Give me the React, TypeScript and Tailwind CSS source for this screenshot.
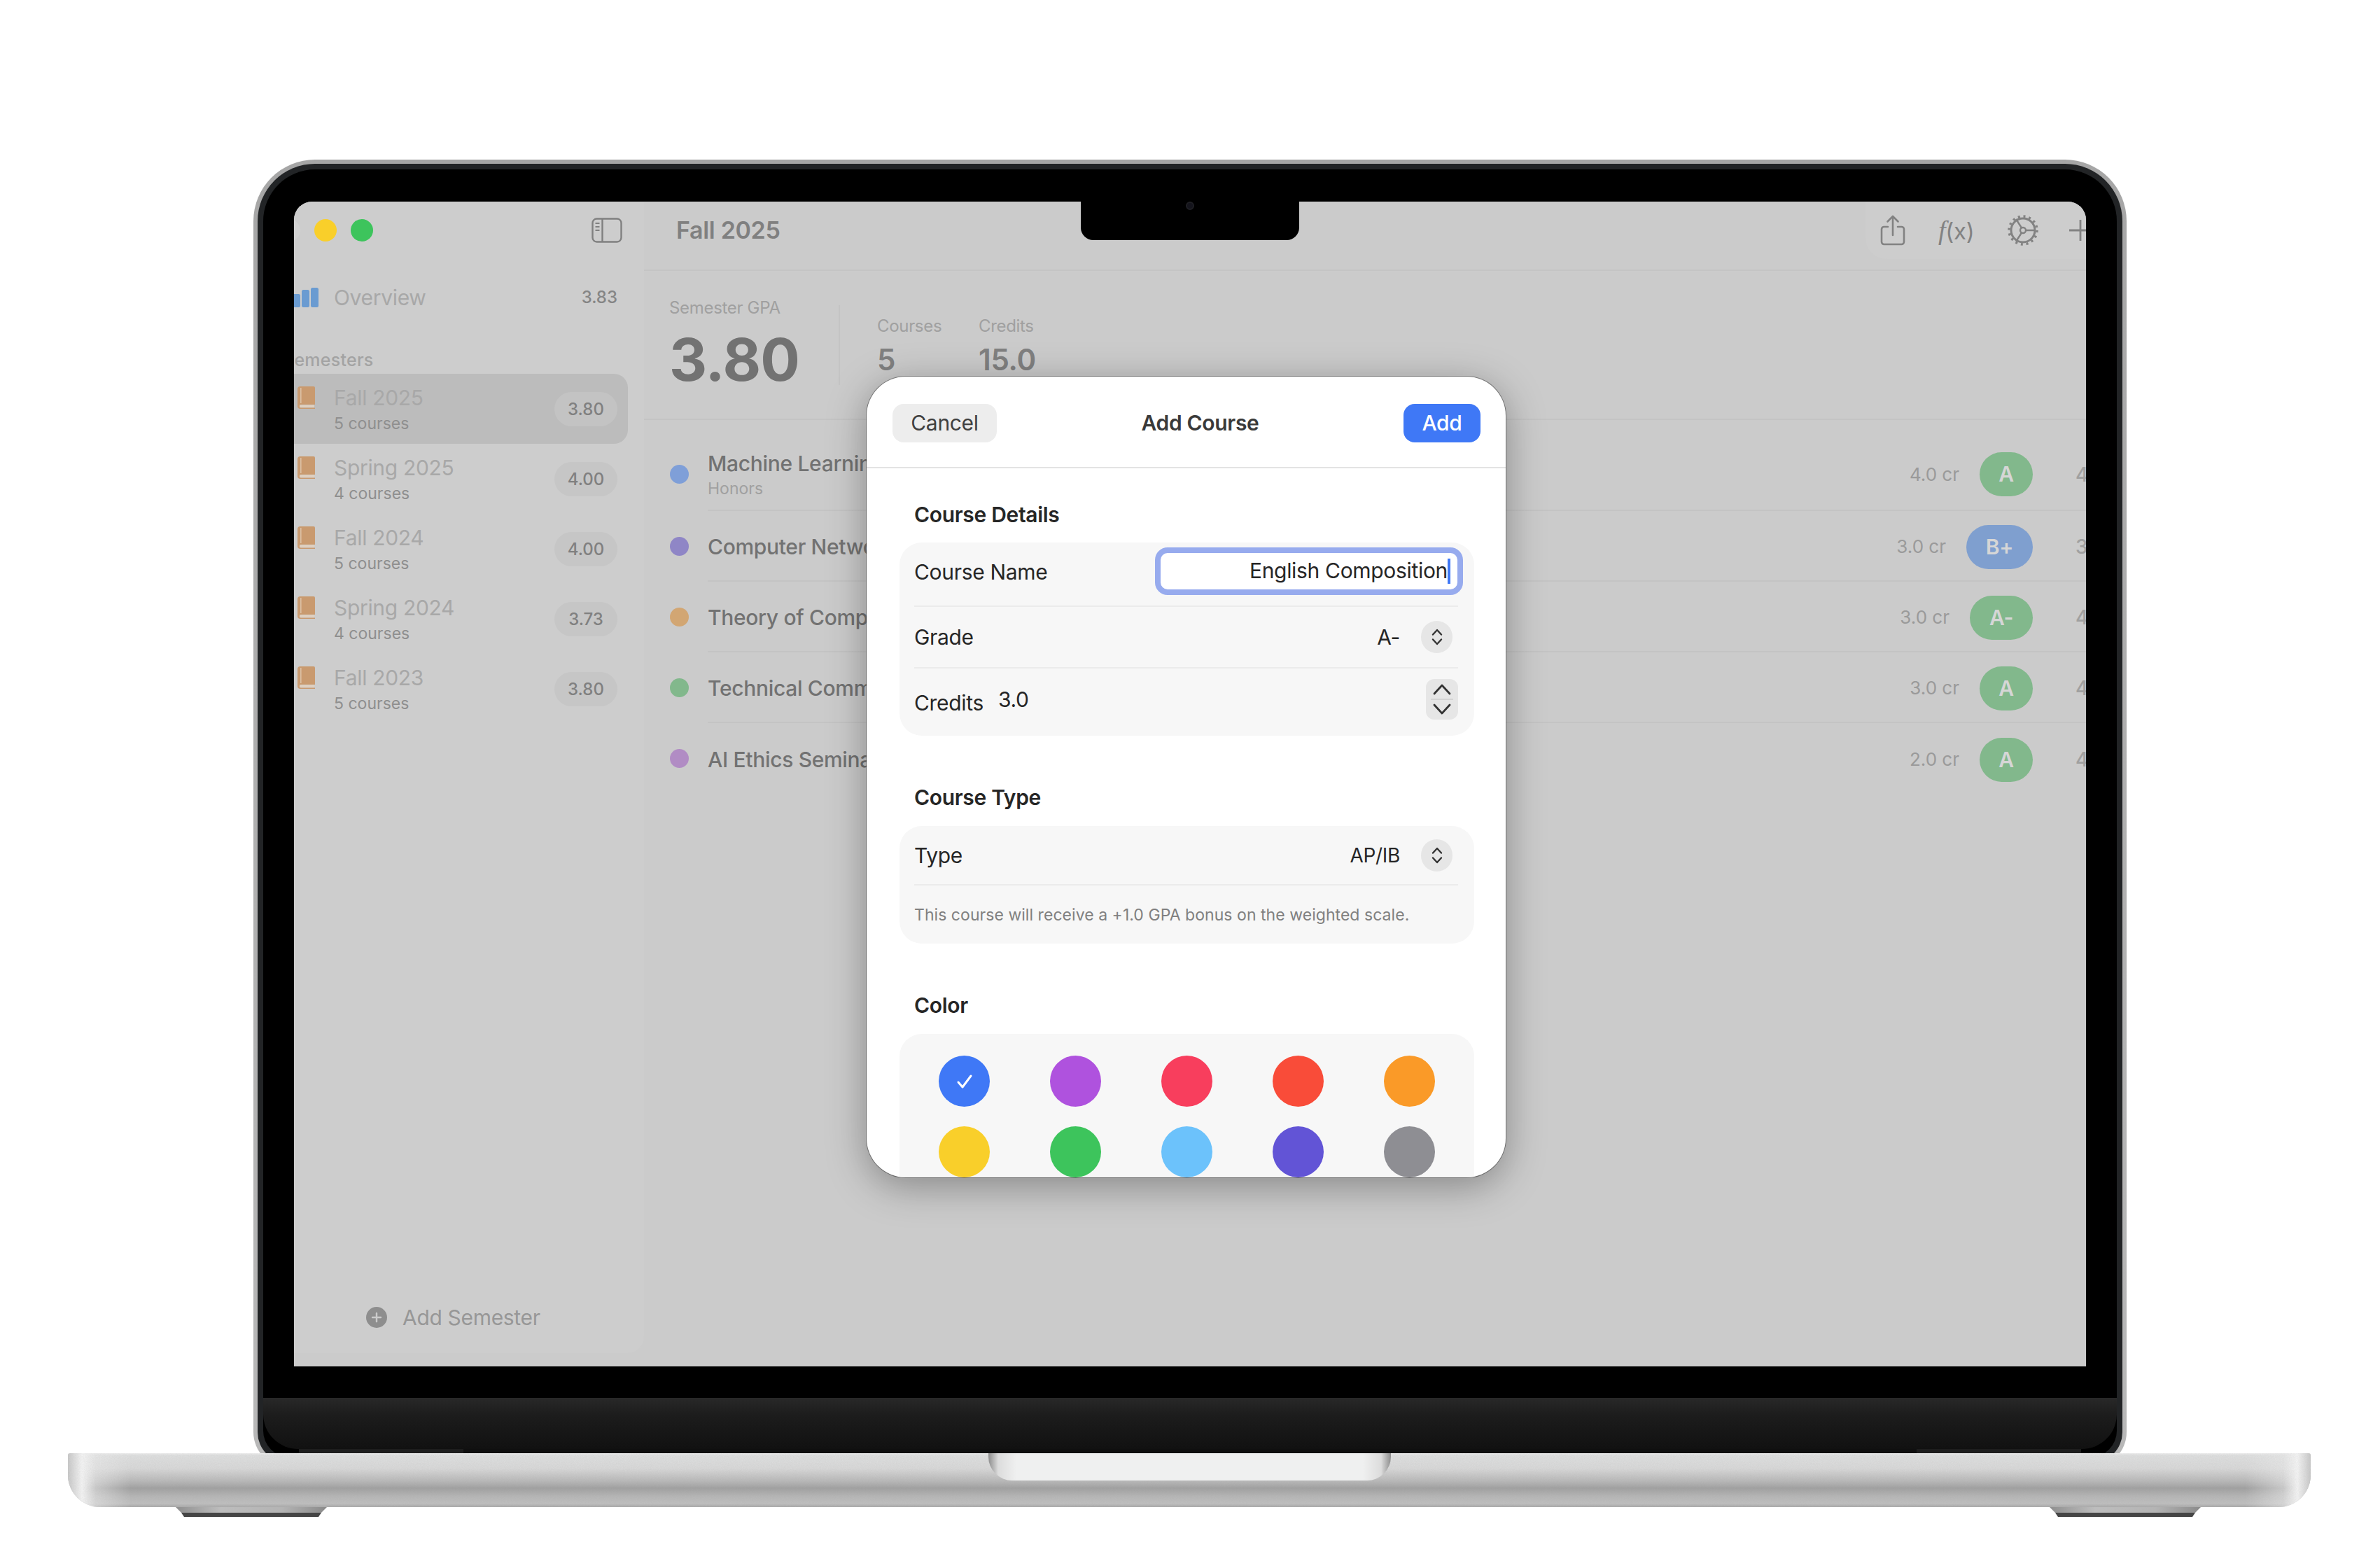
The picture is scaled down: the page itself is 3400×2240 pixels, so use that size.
import React from "react";

const semesters = [
  { name: "Fall 2025", sub: "5 courses", gpa: "3.80", selected: true },
  { name: "Spring 2025", sub: "4 courses", gpa: "4.00" },
  { name: "Fall 2024", sub: "5 courses", gpa: "4.00" },
  { name: "Spring 2024", sub: "4 courses", gpa: "3.73" },
  { name: "Fall 2023", sub: "5 courses", gpa: "3.80" },
];

const courses = [
  { name: "Machine Learning", sub: "Honors", dot: "bg-[#7f9fd8]", cr: "4.0 cr", grade: "A", badge: "bg-[#82b88c] w-[76px]", pts: "4.00", first: true },
  { name: "Computer Networks", dot: "bg-[#8f86c6]", cr: "3.0 cr", grade: "B+", badge: "bg-[#7f9fcf] w-[95px]", pts: "3.30" },
  { name: "Theory of Computation", dot: "bg-[#d2a673]", cr: "3.0 cr", grade: "A-", badge: "bg-[#82b88c] w-[90px]", pts: "4.00" },
  { name: "Technical Communication", dot: "bg-[#82b88c]", cr: "3.0 cr", grade: "A", badge: "bg-[#82b88c] w-[76px]", pts: "4.00" },
  { name: "AI Ethics Seminar", dot: "bg-[#b18cc4]", cr: "2.0 cr", grade: "A", badge: "bg-[#82b88c] w-[76px]", pts: "4.00", last: true },
];

const swatches = [
  "bg-[#3f78f6]", "bg-[#af52de]", "bg-[#f83e5d]", "bg-[#f94c39]", "bg-[#fa9a28]",
  "bg-[#f9cf2a]", "bg-[#3dc45c]", "bg-[#6cc2fb]", "bg-[#6254d6]", "bg-[#8e8e93]",
];

function Book() {
  return (
    <svg width="26" height="32" viewBox="0 0 26 32" className="shrink-0">
      <path d="M4 0h19a2 2 0 0 1 2 2v24H5a2.2 2.2 0 0 0 0 4.4h20V32H4a4 4 0 0 1-4-4V4a4 4 0 0 1 4-4z" fill="#c99a6f" />
      <rect x="4" y="2" width="1.6" height="22" fill="#dcc0a4" />
      <rect x="3" y="26.5" width="21" height="3.6" fill="#dfd0c0" />
    </svg>
  );
}

function UpDown({ label }: { label?: string }) {
  return (
    <div aria-label={label} className="w-[45px] h-[46px] rounded-full bg-[#e6e6e6] flex items-center justify-center shrink-0">
      <svg width="18" height="24" viewBox="0 0 18 24" fill="none" stroke="#333" strokeWidth="2.4" strokeLinecap="round" strokeLinejoin="round">
        <path d="M3 8.5 9 2l6 6.5" />
        <path d="M3 15.5 9 22l6-6.5" />
      </svg>
    </div>
  );
}

function Foot() {
  return (
    <svg width="216" height="14" viewBox="0 0 216 14">
      <defs>
        <linearGradient id="footMetal" x1="0" x2="1" y1="0" y2="0">
          <stop offset="0" stopColor="#8f8f8f" />
          <stop offset="0.3" stopColor="#bdbdbd" />
          <stop offset="0.7" stopColor="#b4b4b4" />
          <stop offset="1" stopColor="#8a8a8a" />
        </linearGradient>
      </defs>
      <path d="M0 0H216L208 8H8Z" fill="url(#footMetal)" />
      <path d="M8 8H208L204 14H12Z" fill="#454545" />
    </svg>
  );
}

export default function App() {
  return (
    <div className="w-[3400px] h-[2240px] bg-white overflow-hidden flex flex-col items-center pt-[228px] tracking-[-0.02em] [font-family:Inter,'Noto_Sans',sans-serif]">
      {/* Lid */}
      <div className="w-[2676px] h-[1868px] rounded-t-[88px] rounded-b-[50px] bg-[linear-gradient(180deg,#a6a6a6,#b8b8b8)] p-[6px] shrink-0">
        <div className="w-full h-full rounded-t-[82px] rounded-b-[44px] bg-[#222426] p-[8px]">
          <div className="w-full h-full rounded-t-[74px] rounded-b-[38px] bg-black pt-[46px] px-[44px] flex flex-col items-center">
            {/* Screen */}
            <div className="w-[2560px] h-[1664px] shrink-0 rounded-t-[26px] overflow-hidden relative flex bg-[#cbcbcb]">
              {/* Sidebar */}
              <aside className="w-[500px] h-[1645px] shrink-0 rounded-br-[24px] bg-[#cdcdcd] flex flex-col">
                <div className="h-[82px] flex items-center shrink-0">
                  <div className="w-[32px] h-[32px] rounded-full bg-[#d2d2d2] -ml-[23px]" />
                  <div className="w-[32px] h-[32px] rounded-full bg-[#f9cf2a] ml-[20px]" />
                  <div className="w-[32px] h-[32px] rounded-full bg-[#3dc45c] ml-[20px]" />
                  <svg width="44" height="36" viewBox="0 0 44 36" fill="none" className="ml-auto mr-[31px]" stroke="#808080" strokeWidth="2.4">
                    <rect x="1.5" y="1.5" width="41" height="33" rx="6" />
                    <path d="M15.5 1.5v33" />
                    <path d="M5.5 8h6M5.5 13h6M5.5 18h6" strokeWidth="2" />
                  </svg>
                </div>

                <div className="h-[110px] flex items-center shrink-0 pr-[38px]">
                  <svg width="39" height="28" viewBox="0 0 39 28" className="-ml-[3px] shrink-0">
                    <rect x="0" y="9" width="12" height="19" rx="2.5" fill="#6a9bd1" />
                    <rect x="14" y="3" width="11" height="25" rx="2.5" fill="#6a9bd1" />
                    <rect x="27" y="0" width="11" height="28" rx="2.5" fill="#6a9bd1" />
                  </svg>
                  <span className="ml-[21px] text-[30px] leading-[38px] text-[#a8a8a8]">Overview</span>
                  <span className="ml-auto text-[24px] leading-[30px] font-medium tracking-normal text-[#858585]">3.83</span>
                </div>

                <div className="h-[54px] pt-[18px] -ml-[16px] text-[25px] leading-[32px] font-medium tracking-[0.01em] text-[#a3a3a3] shrink-0">Semesters</div>

                {semesters.map((s) => (
                  <div
                    key={s.name}
                    className={`h-[100px] -ml-[30px] w-[507px] rounded-[20px] pl-[35px] pr-[15px] flex items-center shrink-0 ${s.selected ? "bg-[#bcbcbc]" : ""}`}
                  >
                    <div className="self-start pt-[18px]">
                      <Book />
                    </div>
                    <div className="ml-[26px] flex flex-col self-start pt-[15px]">
                      <span className="text-[30px] leading-[38px] text-[#a8a8a8]">{s.name}</span>
                      <span className="mt-[3px] text-[23px] leading-[30px] tracking-normal text-[#8f8f8f]">{s.sub}</span>
                    </div>
                    <span className={`ml-auto mt-[1px] h-[49px] w-[90px] rounded-full flex items-center justify-center text-[24px] font-medium tracking-normal text-[#808080] ${s.selected ? "bg-[#c3c3c3]" : "bg-[#c6c6c6]"}`}>
                      {s.gpa}
                    </span>
                  </div>
                ))}

                <div className="mt-auto h-[70px] flex items-start pl-[103px] shrink-0">
                  <div className="flex items-center gap-[22px]">
                    <div className="w-[30px] h-[30px] rounded-full bg-[#8e8e8e] flex items-center justify-center">
                      <svg width="16" height="16" viewBox="0 0 16 16" stroke="#cbcbcb" strokeWidth="2.4" strokeLinecap="round">
                        <path d="M8 2v12M2 8h12" />
                      </svg>
                    </div>
                    <span className="text-[30px] leading-[38px] text-[#979797]">Add Semester</span>
                  </div>
                </div>
              </aside>

              {/* Main */}
              <main className="flex-1 min-w-0 flex flex-col">
                <header className="h-[99px] border-b-2 border-[#c4c4c4] flex items-center pl-[46px] pb-[16px] shrink-0">
                  <h1 className="text-[34px] leading-[44px] font-semibold text-[#808080]">Fall 2025</h1>
                  <div className="ml-auto self-start h-[82px] pl-[21px] bg-[#cdcdcd] rounded-bl-[30px] flex items-center">
                    <svg width="36" height="44" viewBox="0 0 36 44" fill="none" stroke="#828282" strokeWidth="2.6" strokeLinecap="round" strokeLinejoin="round">
                      <path d="M11 17H5.5A3.5 3.5 0 0 0 2 20.5v18A3.5 3.5 0 0 0 5.5 42h25a3.5 3.5 0 0 0 3.5-3.5v-18a3.5 3.5 0 0 0-3.5-3.5H25" />
                      <path d="M18 29V2M10.5 9.5 18 2l7.5 7.5" />
                    </svg>
                    <span className="ml-[47px] w-[52px] text-[33px] leading-[40px] text-[#828282] whitespace-nowrap">
                      <span className="italic [font-family:'Liberation_Serif',serif] text-[38px]">f</span>(x)
                    </span>
                    <svg width="44" height="44" viewBox="0 0 44 44" fill="none" stroke="#828282" className="ml-[47px]">
                      <circle cx="22" cy="22" r="17" strokeWidth="3" />
                      <circle cx="22" cy="22" r="20" strokeWidth="3.5" strokeDasharray="3 4.85" />
                      <circle cx="22" cy="22" r="4" strokeWidth="2.4" />
                      <path d="M26 22h14M20 18.5 12 6M20 25.5 12 38" strokeWidth="2.4" />
                    </svg>
                    <svg width="24" height="32" viewBox="0 0 24 32" stroke="#828282" strokeWidth="2.8" className="ml-[44px]">
                      <path d="M16 1v30M0 16h24" />
                    </svg>
                  </div>
                </header>

                <section className="h-[213px] border-b-2 border-[#c4c4c4] flex items-start pl-[36px] pt-[40px] shrink-0">
                  <div className="w-[242px] shrink-0">
                    <div className="text-[24px] leading-[26px] text-[#a0a0a0] whitespace-nowrap">Semester GPA</div>
                    <div className="mt-[19px] text-[84px] leading-[84px] font-bold tracking-[-0.01em] text-[#727272]">3.80</div>
                  </div>
                  <div className="w-[2px] h-[114px] mt-[9px] bg-[#c4c4c4] shrink-0" />
                  <div className="ml-[53px] w-[145px] mt-[26px] shrink-0">
                    <div className="text-[24px] leading-[26px] text-[#a0a0a0]">Courses</div>
                    <div className="mt-[10px] text-[42px] leading-[50px] font-semibold text-[#808080]">5</div>
                  </div>
                  <div className="mt-[26px] shrink-0">
                    <div className="text-[24px] leading-[26px] text-[#a0a0a0]">Credits</div>
                    <div className="mt-[10px] text-[42px] leading-[50px] font-semibold text-[#808080]">15.0</div>
                  </div>
                </section>

                {courses.map((c) => (
                  <div key={c.name} className={`flex items-stretch pl-[37px] shrink-0 ${c.first ? "h-[130px] pt-[24px]" : "h-[101px]"}`}>
                    <div className={`w-[27px] h-[27px] rounded-full self-center shrink-0 ${c.dot}`} />
                    <div className={`ml-[27px] pt-[3px] flex-1 min-w-0 flex items-center ${c.last ? "" : "border-b-2 border-[#c4c4c4]"}`}>
                      <div className="flex flex-col">
                        <span className="text-[30px] leading-[38px] font-medium text-[#727272]">{c.name}</span>
                        {c.sub && <span className="mt-[2px] text-[23px] leading-[30px] tracking-normal text-[#a0a0a0]">{c.sub}</span>}
                      </div>
                      <span className="ml-auto text-[26px] leading-[32px] tracking-normal text-[#9a9a9a]">{c.cr}</span>
                      <span className={`ml-[29px] h-[63px] rounded-full flex items-center justify-center text-[30px] font-semibold text-[#d6d6d6] shrink-0 ${c.badge}`}>
                        {c.grade}
                      </span>
                      <span className="w-[76px] pl-[61px] overflow-hidden whitespace-nowrap text-[28px] font-medium text-[#a0a0a0] shrink-0">{c.pts}</span>
                    </div>
                  </div>
                ))}
              </main>

              {/* Notch */}
              <div className="absolute top-0 left-[1124px] w-[312px] h-[55px] bg-black rounded-b-[18px] flex justify-center">
                <div className="w-[12px] h-[12px] rounded-full bg-[#14141c] border-2 border-[#1f1f24]" />
              </div>

              {/* Modal */}
              <div className="absolute left-[818px] top-[250px] w-[913px] h-[1144px] rounded-[56px] bg-white overflow-hidden flex flex-col shadow-[0_0_0_1px_rgba(0,0,0,0.35),0_12px_55px_rgba(0,0,0,0.34)]">
                <div className="h-[131px] border-b-2 border-[#e3e3e3] pl-[37px] pr-[36px] pt-[39px] flex items-start justify-between shrink-0">
                  <button className="w-[149px] h-[55px] rounded-[16px] bg-[#ededed] text-[30px] text-[#404040]">Cancel</button>
                  <span className="h-[55px] flex items-center text-[30px] font-semibold text-[#3a3a3a]">Add Course</span>
                  <button className="w-[110px] h-[55px] rounded-[16px] bg-[#3f78f6] text-[30px] font-medium text-white">Add</button>
                </div>

                <div className="pl-[47px] pr-[45px] pt-[48px] text-[#262626]">
                  <div className="pl-[21px] text-[30px] leading-[36px] font-semibold">Course Details</div>
                  <div className="mt-[22px] h-[276px] rounded-[32px] bg-[#f7f7f7] pl-[21px] pr-[23px] flex flex-col">
                    <div className="h-[92px] pb-[9px] border-b-2 border-[#ebebeb] flex items-center justify-between shrink-0">
                      <span className="mt-[2px] text-[30px] leading-[36px]">Course Name</span>
                      <div className="w-[440px] h-[68px] -mr-[7px] rounded-[18px] border-[8px] border-[#97abee] bg-white flex items-center justify-end pr-[10px] text-[30px]">
                        <span>English Composition</span>
                        <span className="w-[4px] h-[36px] bg-[#3f78f6] shrink-0" />
                      </div>
                    </div>
                    <div className="h-[88px] border-b-2 border-[#ebebeb] flex items-center shrink-0">
                      <span className="text-[30px] leading-[36px]">Grade</span>
                      <span className="ml-auto text-[30px] leading-[36px]">A-</span>
                      <div className="ml-[30px] mr-[8px]"><UpDown /></div>
                    </div>
                    <div className="h-[96px] pb-[8px] flex items-center shrink-0">
                      <span className="mt-[10px] text-[30px] leading-[36px]">Credits</span>
                      <span className="ml-[21px] text-[30px] leading-[36px]">3.0</span>
                      <div className="ml-auto w-[46px] h-[58px] rounded-[12px] bg-[#e6e6e6] flex flex-col items-center justify-center">
                        <svg width="26" height="16" viewBox="0 0 26 16" fill="none" stroke="#333" strokeWidth="2.8" strokeLinecap="round" strokeLinejoin="round">
                          <path d="M2 14 13 2l11 12" />
                        </svg>
                        <div className="w-[32px] h-[2px] bg-[#d4d4d4] my-[5px]" />
                        <svg width="26" height="16" viewBox="0 0 26 16" fill="none" stroke="#333" strokeWidth="2.8" strokeLinecap="round" strokeLinejoin="round">
                          <path d="M2 2l11 12L24 2" />
                        </svg>
                      </div>
                    </div>
                  </div>

                  <div className="mt-[70px] pl-[21px] text-[30px] leading-[36px] font-semibold">Course Type</div>
                  <div className="mt-[23px] h-[168px] rounded-[32px] bg-[#f7f7f7] pl-[21px] pr-[23px] flex flex-col">
                    <div className="h-[85px] border-b-2 border-[#ebebeb] flex items-center shrink-0">
                      <span className="text-[30px] leading-[36px]">Type</span>
                      <span className="ml-auto text-[28px] leading-[36px]">AP/IB</span>
                      <div className="ml-[30px] mr-[8px]"><UpDown /></div>
                    </div>
                    <div className="flex-1 flex items-center text-[23px] tracking-[0.002em] text-[#808080] pt-[2px]">
                      This course will receive a +1.0 GPA bonus on the weighted scale.
                    </div>
                  </div>

                  <div className="mt-[70px] pl-[21px] text-[30px] leading-[36px] font-semibold">Color</div>
                  <div className="mt-[23px] rounded-[32px] bg-[#f7f7f7] px-[13px] py-[31px] grid grid-cols-5 justify-items-center gap-y-[28px]">
                    {swatches.map((c, i) => (
                      <div key={c} className={`w-[73px] h-[73px] rounded-full flex items-center justify-center ${c}`}>
                        {i === 0 && (
                          <svg width="24" height="22" viewBox="0 0 24 22" fill="none" stroke="#fff" strokeWidth="3" strokeLinecap="round" strokeLinejoin="round">
                            <path d="M3 12l6 7L21 3" />
                          </svg>
                        )}
                      </div>
                    ))}
                  </div>
                </div>
              </div>
            </div>

            {/* Chin */}
            <div className="mt-[45px] w-[2648px] h-[73px] rounded-b-[50px] bg-[linear-gradient(180deg,#282828,#1c1c1c_35%,#111111)] shrink-0" />
            <div className="w-[2546px] h-[8px] shrink-0 bg-[linear-gradient(90deg,#1d1d1d_235px,#0f0f0f_235px,#0f0f0f_2311px,#1d1d1d_2311px)]" />
          </div>
        </div>
      </div>

      {/* Base */}
      <div className="w-[3204px] h-[77px] -mt-[20px] mr-[2px] relative z-10 rounded-t-[3px] rounded-b-[46px] overflow-hidden shrink-0 bg-[linear-gradient(180deg,#f0f0f0_0px,#dedfdf_3px,#d8d8d8_22px,#b8b8b8_40px,#a0a0a0_50px,#b6b6b6_62px,#bfbfbf_72px,#adadad_76px)] flex justify-center">
        <div className="absolute inset-0 bg-[linear-gradient(90deg,#c8c8c8_0px,#f4f4f4_20px,rgba(235,235,235,0.55)_40px,rgba(220,220,220,0)_90px,rgba(220,220,220,0)_3110px,rgba(235,235,235,0.55)_3165px,#f4f4f4_3185px,#c8c8c8_3204px)]" />
        <svg className="absolute inset-0" width="3204" height="77">
          <filter id="grain">
            <feTurbulence type="fractalNoise" baseFrequency="0.9" numOctaves="2" />
            <feColorMatrix values="0 0 0 0 0.4 0 0 0 0 0.4 0 0 0 0 0.4 0 0 0 0.45 -0.1" />
          </filter>
          <rect width="3204" height="77" filter="url(#grain)" opacity="0.5" />
        </svg>
        <div className="relative w-[575px] h-[39px] rounded-b-[34px] bg-[linear-gradient(90deg,#8d8d8d,#dcdcdc_14px,#eff0f0_40px,#eff0f0_535px,#dcdcdc_561px,#8d8d8d)]" />
      </div>

      {/* Feet */}
      <div className="w-[3204px] mr-[2px] pl-[154px] pr-[157px] flex justify-between shrink-0">
        <Foot />
        <Foot />
      </div>
    </div>
  );
}
